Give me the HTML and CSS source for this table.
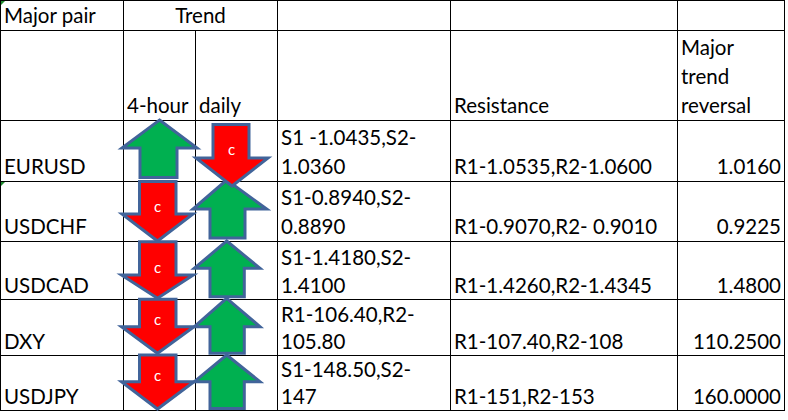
FILE: index.html
```html
<!DOCTYPE html>
<html>
<head>
<meta charset="utf-8">
<link rel="stylesheet" href="styles.css">
</head>
<body>
<div class="sheet">
  <table class="grid">
    <colgroup>
      <col class="c-pair">
      <col class="c-4h">
      <col class="c-daily">
      <col class="c-support">
      <col class="c-res">
      <col class="c-major">
    </colgroup>
    <tr class="r-h1">
      <td class="flag">Major pair</td>
      <td colspan="2" class="center">Trend</td>
      <td></td>
      <td></td>
      <td></td>
    </tr>
    <tr class="r-h2">
      <td></td>
      <td>4-hour</td>
      <td>daily</td>
      <td></td>
      <td>Resistance</td>
      <td>Major<br>trend<br>reversal</td>
    </tr>
    <tr class="r-1">
      <td>EURUSD</td>
      <td></td>
      <td></td>
      <td>S1 -1.0435,S2-<br>1.0360</td>
      <td>R1-1.0535,R2-1.0600</td>
      <td class="num">1.0160</td>
    </tr>
    <tr class="r-2">
      <td class="flag">USDCHF</td>
      <td></td>
      <td></td>
      <td>S1-0.8940,S2-<br>0.8890</td>
      <td>R1-0.9070,R2- 0.9010</td>
      <td class="num">0.9225</td>
    </tr>
    <tr class="r-3">
      <td>USDCAD</td>
      <td></td>
      <td></td>
      <td>S1-1.4180,S2-<br>1.4100</td>
      <td>R1-1.4260,R2-1.4345</td>
      <td class="num">1.4800</td>
    </tr>
    <tr class="r-4">
      <td>DXY</td>
      <td></td>
      <td></td>
      <td>R1-106.40,R2-<br>105.80</td>
      <td>R1-107.40,R2-108</td>
      <td class="num">110.2500</td>
    </tr>
    <tr class="r-5">
      <td>USDJPY</td>
      <td></td>
      <td></td>
      <td>S1-148.50,S2-<br>147</td>
      <td>R1-151,R2-153</td>
      <td class="num">160.0000</td>
    </tr>
  </table>

  <svg class="arrows" width="788" height="420" viewBox="0 0 788 420" xmlns="http://www.w3.org/2000/svg">
    <g class="up">
      <polygon points="159.5,120 197,148 177,148 177,177.5 140,177.5 140,148 122,148"/>
      <polygon points="226.7,180 266.7,209 245,209 245,238 210,238 210,209 193,209"/>
      <polygon points="226.7,241 260,268.3 244.3,268.3 244.3,296.7 210,296.7 210,268.3 194.3,268.3"/>
      <polygon points="226.7,298.3 260,326.7 244.3,326.7 244.3,353.3 210,353.3 210,326.7 194.3,326.7"/>
      <polygon points="226.7,355 260,381.7 244.3,381.7 244.3,408.5 210,408.5 210,381.7 194.3,381.7"/>
    </g>
    <g class="down">
      <polygon points="213,124.5 249,124.5 249,158 268,158 232,186 196,158 213,158"/>
      <polygon points="139.5,181.5 176,181.5 176,214 193,214 157.5,241 122,214 139.5,214"/>
      <polygon points="139.5,241.7 176,241.7 176,275 193.3,275 157.5,298.3 121.5,275 139.5,275"/>
      <polygon points="139.5,299.3 176,299.3 176,326.7 194,326.7 157.5,353.3 121.5,326.7 139.5,326.7"/>
      <polygon points="139.5,355 176,355 176,381.7 194,381.7 157.5,409 121.5,381.7 139.5,381.7"/>
    </g>
    <g class="labels">
      <text x="231.5" y="154.5">c</text>
      <text x="157.7" y="212">c</text>
      <text x="157.7" y="272.5">c</text>
      <text x="157.7" y="325">c</text>
      <text x="157.7" y="381">c</text>
    </g>
  </svg>
</div>
</body>
</html>
```

FILE: styles.css
```css
html, body {
  margin: 0;
  padding: 0;
  background: #ffffff;
}

.sheet {
  position: relative;
  width: 788px;
  height: 420px;
  overflow: hidden;
}

.grid {
  border-collapse: collapse;
  table-layout: fixed;
  width: 785px;
  font-family: Lato, "Liberation Sans", sans-serif;
  font-size: 20.5px;
  color: #000000;
}

.c-pair { width: 123px; }
.c-4h { width: 72px; }
.c-daily { width: 82px; }
.c-support { width: 173px; }
.c-res { width: 227px; }
.c-major { width: 107px; }

.grid td {
  border: 1px solid #000000;
  padding: 0 3px 0 3px;
  line-height: 29px;
  vertical-align: bottom;
  white-space: nowrap;
  overflow: hidden;
  position: relative;
}

.grid td.center { text-align: center; }
.grid td.num { text-align: right; }

.grid td.flag::before {
  content: "";
  position: absolute;
  left: 0;
  top: 0;
  width: 0;
  height: 0;
  border-top: 4px solid #1e8a2e;
  border-right: 4px solid transparent;
}

.r-h1 { height: 30px; }
.r-h2 { height: 90px; }
.r-1 { height: 61px; }
.r-2 { height: 60px; }
.r-3 { height: 58px; }
.r-4 { height: 56px; }
.r-5 { height: 55px; }

.r-3 td { line-height: 28px; }
.r-4 td,
.r-5 td { line-height: 27px; }

.arrows {
  position: absolute;
  left: 0;
  top: 0;
  pointer-events: none;
}

.arrows polygon {
  stroke: #41649a;
  stroke-width: 3;
  stroke-linejoin: miter;
}

.up polygon { fill: #00b050; }
.down polygon { fill: #ff0000; }

.labels text {
  fill: #ffffff;
  font-family: Lato, "Liberation Sans", sans-serif;
  font-size: 15px;
  text-anchor: middle;
}
```
